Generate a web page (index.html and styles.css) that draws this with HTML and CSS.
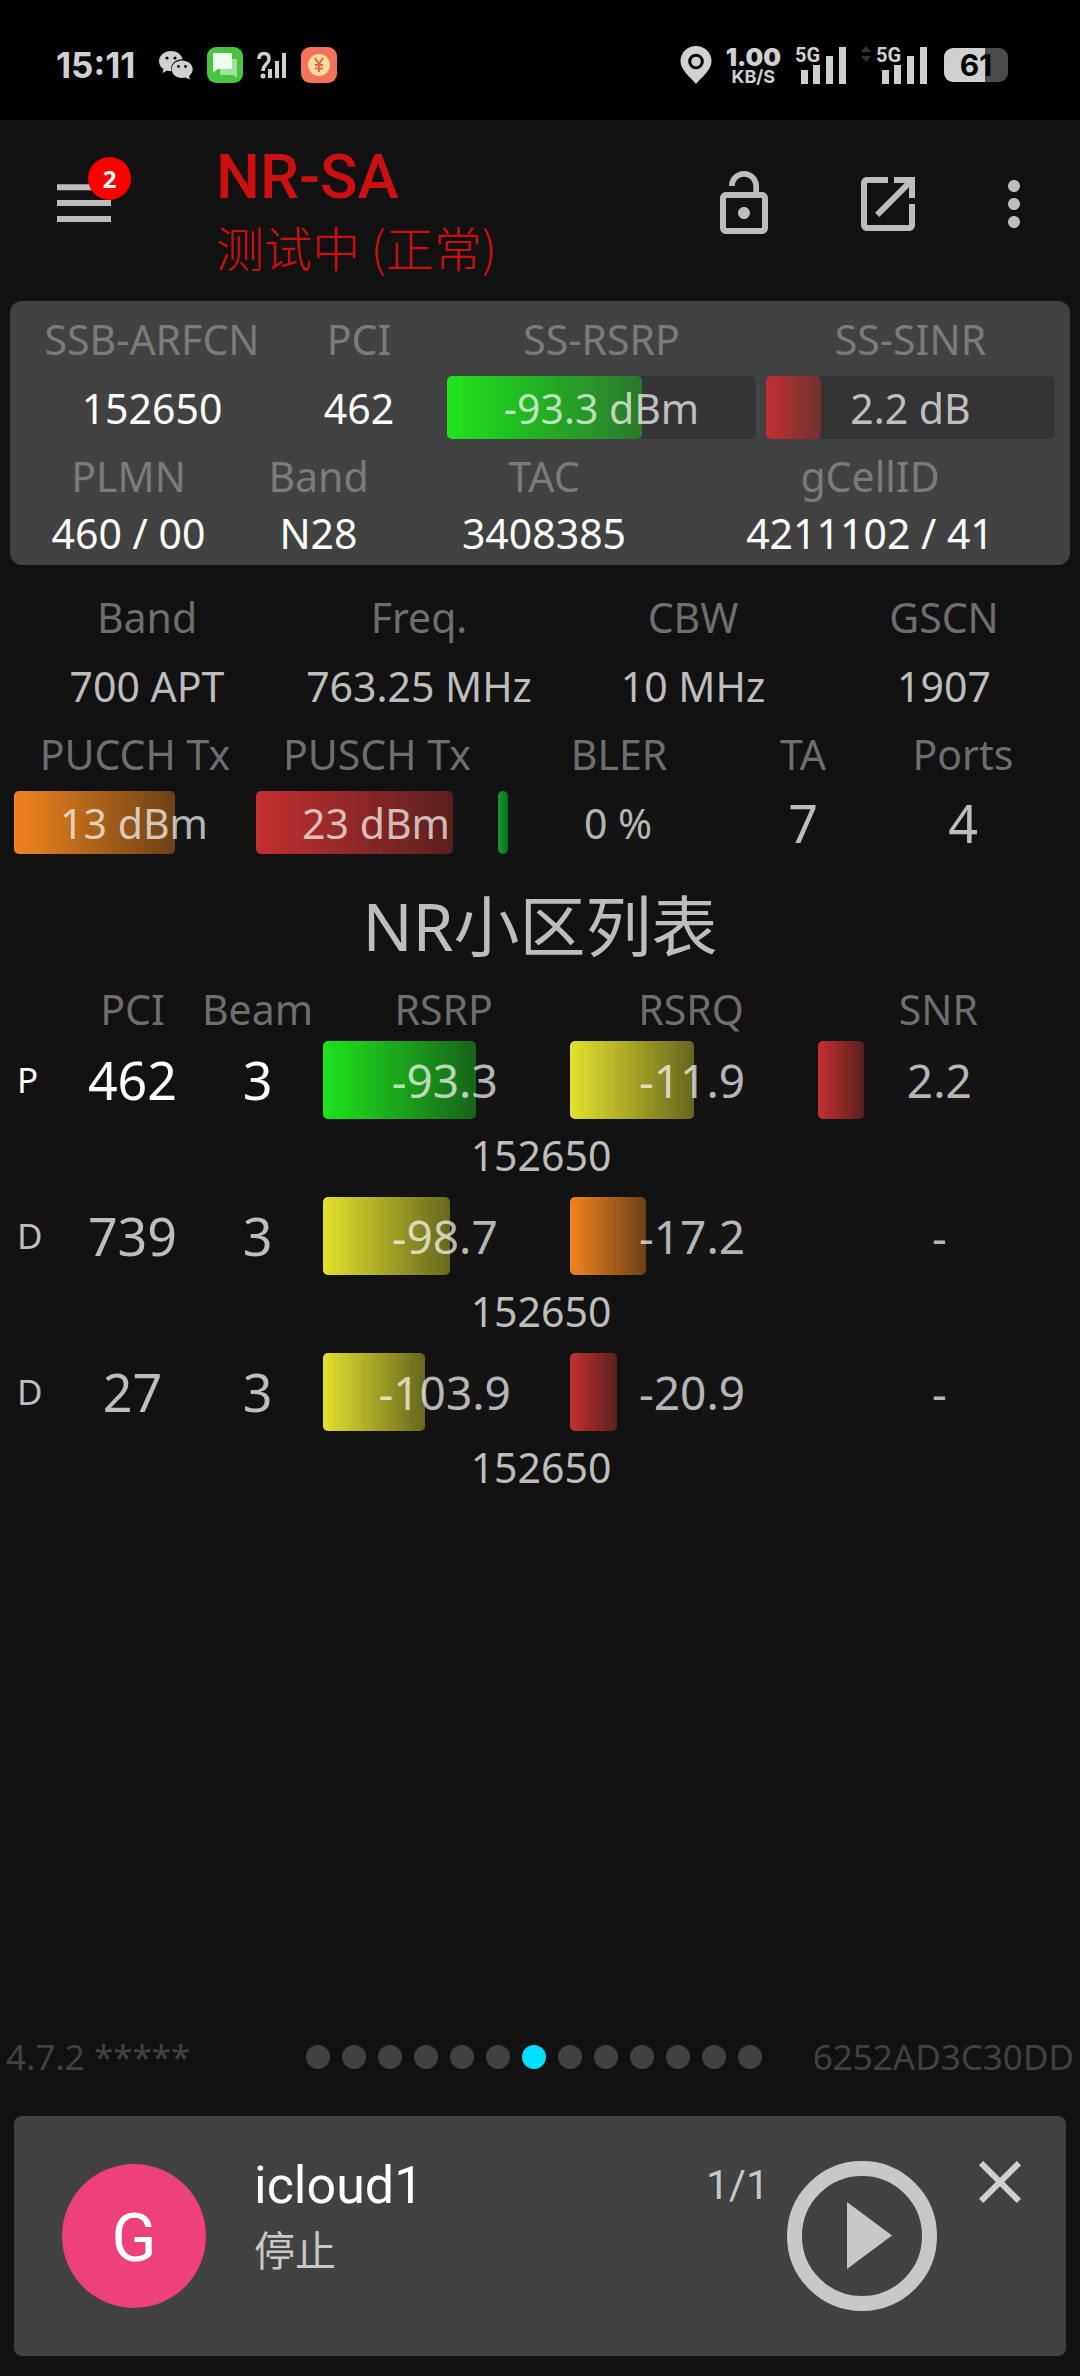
FILE: index.html
```html
<!DOCTYPE html>
<html lang="zh-CN">
<head>
    <meta charset="UTF-8">
    <meta name="viewport" content="width=device-width, initial-scale=1"/>
    <title>NR-SA</title>
    <link rel="stylesheet" href="styles.css">
</head>
<body>
<div class="statusbar">
    <div class="status-left">
        <span class="clock">15:11</span>
        <svg class="wechat" viewBox="0 0 34 30" width="34" height="30">
            <path fill="#d0d0d0" d="M12 1C5.400 1 0 5.500 0 11.200c0 3.200 1.800 6 4.500 7.800L3.500 23l4.300-2.200c1.300.3 2.700.5 4.200.5h.6c-.3-1-.4-1.900-.4-2.800 0-5.200 4.900-9.200 10.900-9.200h.6C22.500 4.500 17.700 1 12 1z"/>
            <path fill="#d0d0d0" d="M23 10.500c-5.800 0-10.300 3.900-10.300 8.800S17.200 28 23 28c1.200 0 2.400-.2 3.500-.5L31 29.500l-1-3.600c2.300-1.600 3.700-4 3.700-6.600 0-4.900-4.800-8.800-10.700-8.800z"/>
            <g fill="#000"><circle cx="8" cy="8" r="1.600"/><circle cx="16" cy="8" r="1.600"/><circle cx="19.500" cy="16.500" r="1.400"/><circle cx="26.500" cy="16.500" r="1.400"/></g>
        </svg>
        <svg class="sms" viewBox="0 0 36 36" width="36" height="36">
            <rect width="36" height="36" rx="9" fill="#4ac440"/>
            <path fill="#9fe29b" d="M13 12h15.500c.800 0 1.500.7 1.500 1.500V31l-4-3H14c-.600 0-1-.4-1-1z"/>
            <path fill="#eefcee" d="M7.500 6h16c.800 0 1.500.7 1.500 1.500V21c0 .6-.4 1-1 1H11l-5 3.500V7.500C6 6.700 6.700 6 7.500 6z"/>
        </svg>
        <svg class="nosim" viewBox="0 0 30 28" width="30" height="28">
            <path fill="none" stroke="#d0d0d0" stroke-width="3.500" d="M2 8c0-3.500 2-5.500 5-5.500S12 4.500 12 8c0 5-6 5-6 12"/>
            <g fill="#d0d0d0"><circle cx="6" cy="25" r="2.500"/><rect x="11" y="18" width="4" height="9"/><rect x="18" y="10" width="4" height="17"/><rect x="25" y="2" width="4" height="25"/></g>
        </svg>
        <svg class="pay" viewBox="0 0 36 36" width="36" height="36">
            <rect width="36" height="36" rx="9" fill="#f0735c"/>
            <circle cx="18" cy="18" r="11" fill="#fbd9a0"/>
            <path fill="none" stroke="#e0674c" stroke-width="2" d="M14 11l4 6 4-6M18 17v8M14 18h8M14 21.500h8"/>
        </svg>
    </div>
    <div class="status-right">
        <svg class="pin" viewBox="0 0 32 38" width="32" height="38">
            <path fill="#d0d0d0" d="M16 0C7.200 0 .500 6.700.500 15c0 9.500 10 16 15.500 23 5.500-7 15.500-13.500 15.500-23C31.500 6.700 24.800 0 16 0z"/>
            <circle cx="16" cy="15.500" r="6.300" fill="#d0d0d0" stroke="#000" stroke-width="3"/>
        </svg>
        <span class="speed"><b>1.00</b><small>KB/S</small></span>
        <span class="signal">
            <span>5G</span>
            <svg viewBox="0 0 46 37" width="46" height="37"><path fill="#d0d0d0" d="M0 23h7v14H0zM12 18h7v19h-7zM25 9h7v28h-7zM38 0h7v37h-7z"/></svg>
        </span>
        <svg class="updown" viewBox="0 0 10 16" width="10" height="16"><path fill="#333" d="M0 6l5-6 5 6zM0 10l5 6 5-6z"/></svg>
        <span class="signal">
            <span>5G</span>
            <svg viewBox="0 0 46 37" width="46" height="37"><path fill="#d0d0d0" d="M0 23h7v14H0zM12 18h7v19h-7zM25 9h7v28h-7zM38 0h7v37h-7z"/></svg>
        </span>
        <span class="battery"><span>61</span></span>
    </div>
</div>

<header class="appbar">
    <button class="icon menu" aria-label="Menu">
        <svg viewBox="0 0 24 24"><path d="M3 18h18v-2H3v2zm0-5.300h18v-2H3v2zm0-7.300v2h18v-2H3z"/></svg>
        <span class="badge">2</span>
    </button>
    <div class="titles">
        <h1>NR-SA</h1>
        <p>测试中 (正常)</p>
    </div>
    <button class="icon lock" aria-label="Lock">
        <svg viewBox="0 0 24 24"><path d="M12 17c1.100 0 2-.9 2-2s-.900-2-2-2-2 .9-2 2 .900 2 2 2zm6-9h-1V6c0-2.760-2.240-5-5-5S7 3.240 7 6h1.900c0-1.710 1.390-3.100 3.100-3.100s3.100 1.390 3.100 3.100v2H6c-1.100 0-2 .9-2 2v10c0 1.100.900 2 2 2h12c1.100 0 2-.9 2-2V10c0-1.100-.900-2-2-2zm0 12H6V10h12v10z"/></svg>
    </button>
    <button class="icon open" aria-label="Open">
        <svg viewBox="0 0 24 24"><path d="M12 3v2H5v14h14v-7h2v7c0 1.100-.900 2-2 2H5c-1.100 0-2-.9-2-2V5c0-1.100.900-2 2-2zM14 3h7v7h-2V6.400L9.100 16.300 7.700 14.900 17.600 5H14z"/></svg>
    </button>
    <button class="icon more" aria-label="More">
        <svg viewBox="0 0 24 24"><path d="M12 8c1.100 0 2-.9 2-2s-.900-2-2-2-2 .9-2 2 .900 2 2 2zm0 2c-1.100 0-2 .9-2 2s.900 2 2 2 2-.9 2-2-.900-2-2-2zm0 6c-1.100 0-2 .9-2 2s.900 2 2 2 2-.9 2-2-.900-2-2-2z"/></svg>
    </button>
</header>

<main>
    <section class="serving">
        <dl class="row serving-signal">
            <div><dt>SSB-ARFCN</dt><dd>152650</dd></div>
            <div><dt>PCI</dt><dd>462</dd></div>
            <div><dt>SS-RSRP</dt><dd><span class="bar"><i class="green" style="width: 63%"></i><span>-93.3 dBm</span></span></dd></div>
            <div><dt>SS-SINR</dt><dd><span class="bar"><i class="red" style="width: 19%"></i><span>2.2 dB</span></span></dd></div>
        </dl>
        <dl class="row serving-ids">
            <div><dt>PLMN</dt><dd>460 / 00</dd></div>
            <div><dt>Band</dt><dd>N28</dd></div>
            <div><dt>TAC</dt><dd>3408385</dd></div>
            <div><dt>gCellID</dt><dd>4211102 / 41</dd></div>
        </dl>
    </section>

    <section class="details">
        <dl class="row radio">
            <div><dt>Band</dt><dd>700 APT</dd></div>
            <div><dt>Freq.</dt><dd>763.25 MHz</dd></div>
            <div><dt>CBW</dt><dd>10 MHz</dd></div>
            <div><dt>GSCN</dt><dd>1907</dd></div>
        </dl>
        <dl class="row uplink">
            <div><dt>PUCCH Tx</dt><dd><span class="bar"><i class="orange" style="width: 67%"></i><span>13 dBm</span></span></dd></div>
            <div><dt>PUSCH Tx</dt><dd><span class="bar"><i class="red" style="width: 82%"></i><span>23 dBm</span></span></dd></div>
            <div><dt>BLER</dt><dd><span class="bar"><i class="dark-green" style="width: 4%"></i><span>0 %</span></span></dd></div>
            <div><dt>TA</dt><dd class="big">7</dd></div>
            <div><dt>Ports</dt><dd class="big">4</dd></div>
        </dl>
    </section>

    <h2>NR小区列表</h2>
    <table class="cells">
        <colgroup>
            <col class="col-type"><col class="col-pci"><col class="col-beam"><col><col><col>
        </colgroup>
        <thead>
        <tr><th></th><th>PCI</th><th>Beam</th><th>RSRP</th><th>RSRQ</th><th>SNR</th></tr>
        </thead>
        <tbody>
        <tr class="primary">
            <td class="type">P</td>
            <td>462</td>
            <td>3</td>
            <td><span class="bar"><i class="green" style="width: 63%"></i><span>-93.3</span></span></td>
            <td><span class="bar"><i class="yellow" style="width: 51%"></i><span>-11.9</span></span></td>
            <td><span class="bar"><i class="red" style="width: 19%"></i><span>2.2</span></span></td>
        </tr>
        <tr><td class="arfcn" colspan="6">152650</td></tr>
        <tr>
            <td class="type">D</td>
            <td>739</td>
            <td>3</td>
            <td><span class="bar"><i class="yellow" style="width: 52%"></i><span>-98.7</span></span></td>
            <td><span class="bar"><i class="orange" style="width: 31%"></i><span>-17.2</span></span></td>
            <td><span class="bar"><span>-</span></span></td>
        </tr>
        <tr><td class="arfcn" colspan="6">152650</td></tr>
        <tr>
            <td class="type">D</td>
            <td>27</td>
            <td>3</td>
            <td><span class="bar"><i class="yellow" style="width: 42%"></i><span>-103.9</span></span></td>
            <td><span class="bar"><i class="red" style="width: 19%"></i><span>-20.9</span></span></td>
            <td><span class="bar"><span>-</span></span></td>
        </tr>
        <tr><td class="arfcn" colspan="6">152650</td></tr>
        </tbody>
    </table>
</main>

<div class="pager">
    <span>4.7.2 *****</span>
    <div class="dots">
        <i></i><i></i><i></i><i></i><i></i><i></i><i class="active"></i><i></i><i></i><i></i><i></i><i></i><i></i>
    </div>
    <span class="device">6252AD3C30DD</span>
</div>

<footer class="player">
    <div class="avatar">G</div>
    <div class="task">
        <strong>icloud1</strong>
        <span>停止</span>
    </div>
    <span class="count">1/1</span>
    <button class="play" aria-label="Play">
        <svg viewBox="0 0 150 150"><circle cx="75" cy="75" r="67.500" fill="none" stroke="#c8c8c8" stroke-width="15"/><path fill="#c8c8c8" d="M60 41v67l45-33.500z"/></svg>
    </button>
    <button class="icon close" aria-label="Close">
        <svg viewBox="0 0 24 24"><path d="M19 6.410L17.590 5 12 10.590 6.410 5 5 6.410 10.590 12 5 17.590 6.410 19 12 13.410 17.590 19 19 17.590 13.410 12z"/></svg>
    </button>
</footer>
</body>
</html>
```
FILE: styles.css
```css
* {
    box-sizing: border-box;
    margin: 0;
    padding: 0;
}

body {
    display: flex;
    flex-direction: column;
    min-height: 100vh;
    background-color: #121212;
    color: #bdbdbd;
    font-family: "Noto Sans", "Noto Sans CJK SC", sans-serif;
    font-size: 41px;
}

svg {
    display: block;
}

button {
    border: none;
    background: none;
    color: inherit;
    font: inherit;
}

/* system status bar */

.statusbar {
    display: flex;
    justify-content: space-between;
    height: 120px;
    padding: 10px 72px 0 56px;
    background-color: black;
    color: #d0d0d0;
    font-family: Inter, sans-serif;
    font-weight: bold;
}

.status-left, .status-right {
    display: flex;
    align-items: center;
    gap: 14px;
}

.clock {
    margin-right: 10px;
    font-size: 35px;
}

.speed {
    display: flex;
    flex-direction: column;
    align-items: center;
    font-size: 25px;
    line-height: 24px;
}

.speed small {
    font-size: 18px;
    line-height: 16px;
}

.signal {
    display: grid;
}

.signal span, .signal svg {
    grid-area: 1 / 1;
}

.signal span {
    font-family: Roboto, sans-serif;
    font-size: 20px;
    line-height: 16px;
}

.signal svg {
    margin-left: 6px;
}

.updown {
    align-self: flex-start;
    margin: 36px -9px 0 0;
}

.battery {
    width: 64px;
    height: 34px;
    margin-left: 2px;
    border-radius: 9px;
    background: linear-gradient(to right, #d0d0d0 41px, #4c4c4c 41px);
    color: black;
    font-size: 30px;
    line-height: 35px;
    text-align: center;
}

/* app bar */

.appbar {
    display: flex;
    align-items: center;
    height: 168px;
    margin-bottom: 13px;
    padding: 0 30px 0 48px;
}

.icon {
    position: relative;
    width: 72px;
    height: 72px;
    fill: #bdbdbd;
}

.badge {
    position: absolute;
    top: -11px;
    right: -11px;
    width: 43px;
    height: 43px;
    border-radius: 50%;
    background-color: #ff0000;
    color: white;
    font-size: 24px;
    font-weight: bold;
    line-height: 43px;
}

.titles {
    flex: 1;
    margin-left: 96px;
    color: #cc1012;
}

.titles h1 {
    font-family: Roboto, sans-serif;
    font-size: 62px;
    font-weight: 500;
    line-height: 84px;
}

.titles p {
    font-family: "Noto Sans CJK SC", sans-serif;
    font-size: 48px;
    font-weight: 300;
    line-height: 54px;
}

.lock {
    margin-right: 72px;
}

.open {
    margin-right: 54px;
}

/* label over value rows */

.row {
    display: grid;
    text-align: center;
}

dt {
    color: #6e6e6e;
    line-height: 50px;
}

dd {
    display: flex;
    align-items: center;
    justify-content: center;
    height: 87px;
}

dd.big {
    font-size: 52px;
}

.bar {
    display: grid;
    align-items: center;
    width: 100%;
    height: 63px;
    border-radius: 5px;
    background-color: rgba(26, 26, 26, 0.35);
    color: rgba(255, 255, 255, 0.7);
    text-align: center;
}

.bar i, .bar span {
    grid-area: 1 / 1;
}

.bar i {
    height: 100%;
    border-radius: 5px;
}

.green {
    background: linear-gradient(to right, #1ee41e, rgba(30, 220, 30, 0.4));
}

.dark-green {
    background: linear-gradient(to right, #149a2a, #136a22);
}

.yellow {
    background: linear-gradient(to right, #e2e22e, rgba(226, 226, 46, 0.4));
}

.orange {
    background: linear-gradient(to right, #f0841e, rgba(240, 132, 30, 0.4));
}

.red {
    background: linear-gradient(to right, #c43030, rgba(196, 48, 48, 0.4));
}

.serving {
    margin: 0 10px;
    padding: 13px 10px 0 18px;
    border-radius: 12px;
    background-color: #424242;
    color: white;
}

.serving dt {
    color: #7b7b7b;
}

.serving-signal {
    grid-template-columns: 248fr 166fr 319fr 299fr;
}

.serving-signal dd {
    padding: 0 5px;
}

.serving-ids {
    grid-template-columns: 201fr 179fr 272fr 380fr;
}

.serving-ids dd {
    height: 64px;
}

.details {
    padding: 27px 20px 0 14px;
}

.radio {
    grid-template-columns: 266fr 278fr 270fr 232fr;
}

.uplink {
    grid-template-columns: 242fr 242fr 242fr 126fr 194fr;
}

.uplink .bar {
    margin-right: 2px;
}

/* cell list */

h2 {
    font-size: 66px;
    font-weight: normal;
    line-height: 118px;
    text-align: center;
}

.cells {
    width: 100%;
    padding-right: 18px;
    border-spacing: 0;
    table-layout: fixed;
    text-align: center;
}

.col-type {
    width: 70px;
}

.col-pci, .col-beam {
    width: 125px;
}

th {
    padding-bottom: 7px;
    color: #6e6e6e;
    font-weight: normal;
    line-height: 50px;
}

td {
    font-size: 52px;
    line-height: 78px;
}

.primary {
    color: white;
}

td.type {
    padding-left: 17px;
    font-size: 35px;
    text-align: left;
}

.cells .bar {
    width: auto;
    height: 78px;
    margin: 0 1px 0 3px;
    font-size: 46px;
}

td.arfcn {
    padding: 0 0 6px 20px;
    font-size: 41px;
    line-height: 72px;
}

/* page indicator */

.pager {
    display: grid;
    grid-template-columns: 1fr auto 1fr;
    align-items: center;
    margin: auto 0 35px;
    padding: 0 6px;
    color: #424242;
    font-size: 35px;
    line-height: 48px;
}

.dots {
    display: flex;
}

.dots i {
    width: 24px;
    height: 24px;
    margin-right: 12px;
    border-radius: 50%;
    background-color: #424242;
}

.dots .active {
    background-color: #00e0ff;
}

.device {
    text-align: right;
}

/* task player */

.player {
    display: flex;
    align-items: center;
    height: 240px;
    margin: 0 14px 20px;
    padding: 0 30px 0 48px;
    border-radius: 8px;
    background-color: #424242;
    color: #c8c8c8;
    font-family: Roboto, "Noto Sans CJK SC", sans-serif;
}

.avatar {
    width: 144px;
    height: 144px;
    border-radius: 50%;
    background-color: #ee417c;
    color: white;
    font-size: 66px;
    line-height: 150px;
    text-align: center;
}

.task {
    display: flex;
    flex: 1;
    flex-direction: column;
    align-self: flex-start;
    margin: 38px 0 0 48px;
}

.task strong {
    color: white;
    font-size: 52px;
    font-weight: normal;
    line-height: 64px;
}

.count {
    align-self: flex-start;
    margin: 39px 18px 0 0;
    line-height: 60px;
}

.play {
    width: 150px;
    height: 150px;
}

.close {
    align-self: flex-start;
    margin: 30px 0 0 27px;
    fill: #d0d0d0;
}
```
